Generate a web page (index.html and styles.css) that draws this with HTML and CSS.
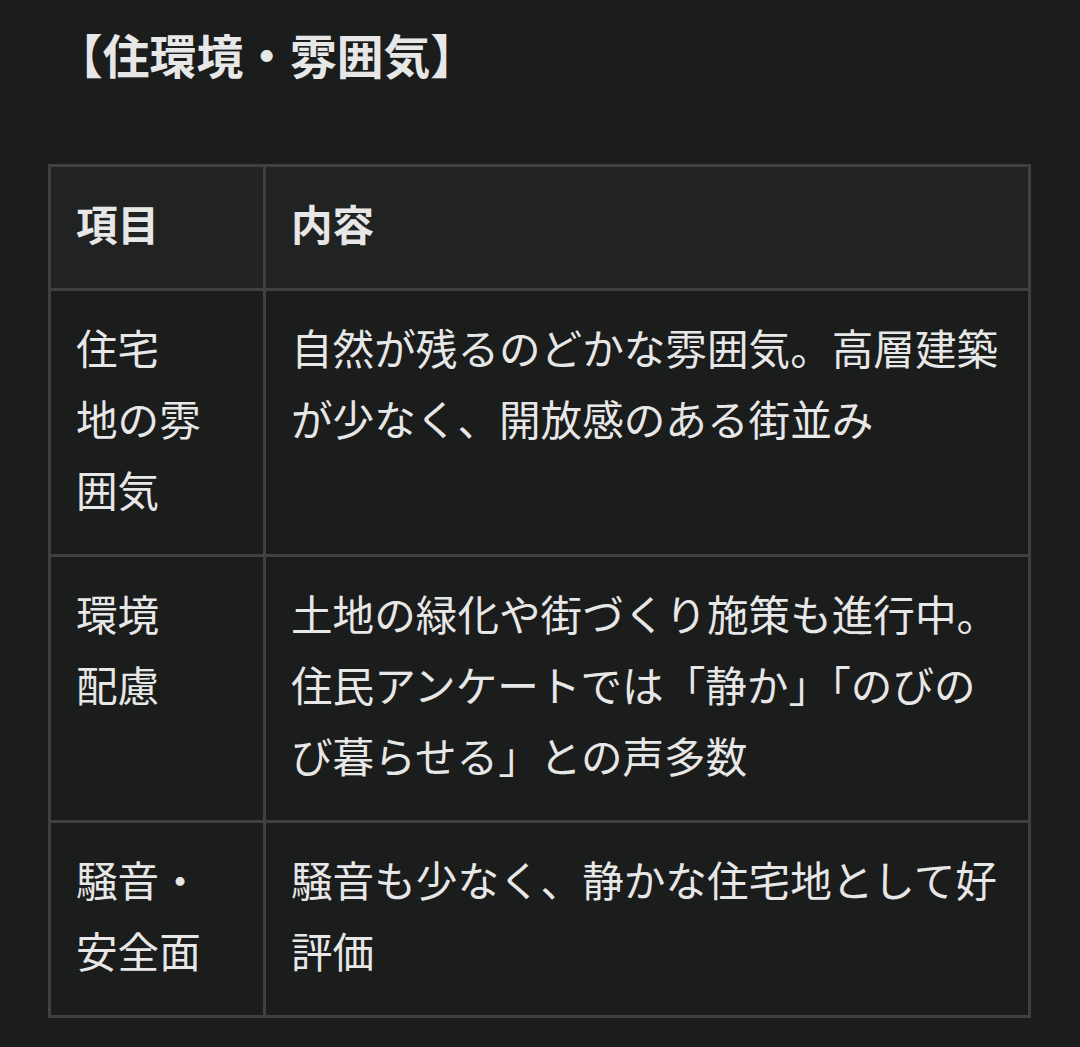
FILE: index.html
```html
<!DOCTYPE html>
<html lang="ja">
<head>
<meta charset="utf-8">
<title>住環境・雰囲気</title>
<link rel="stylesheet" href="styles.css">
</head>
<body>
<main class="page">
  <h2 class="title">【住環境・雰囲気】</h2>
  <table class="info">
    <thead>
      <tr>
        <th class="col-item">項目</th>
        <th class="col-body">内容</th>
      </tr>
    </thead>
    <tbody>
      <tr>
        <td>住宅<br>地の雰<br>囲気</td>
        <td>自然が残るのどかな雰囲気。高層建築が少なく、開放感のある街並み</td>
      </tr>
      <tr>
        <td>環境<br>配慮</td>
        <td>土地の緑化や街づくり施策も進行中。住民アンケートでは「静か」「のびのび暮らせる」との声多数</td>
      </tr>
      <tr>
        <td>騒音・<br>安全面</td>
        <td>騒音も少なく、静かな住宅地として好評価</td>
      </tr>
    </tbody>
  </table>
</main>
</body>
</html>
```

FILE: styles.css
```css
html, body {
  margin: 0;
  padding: 0;
  background: #1b1c1c;
}

body {
  font-family: "Noto Sans CJK JP", "Noto Sans", sans-serif;
  color: #e7e7e7;
  font-size: 41.6px;
  line-height: 71px;
}

.page {
  padding: 18px 49px 0 48px;
}

.title {
  margin: 0 0 75px 8px;
  font-size: 46.8px;
  line-height: 71px;
  font-weight: 700;
}

.info {
  width: 983px;
  table-layout: fixed;
  border-collapse: collapse;
  border: 3px solid #3f4041;
}

.info th,
.info td {
  border: 3px solid #3f4041;
  padding: 21px 24px 29px 25px;
  text-align: left;
  vertical-align: top;
}

.info th {
  background: #212222;
  font-weight: 700;
}

.info td {
  font-weight: 400;
}

.col-item {
  width: 163px;
}
```
